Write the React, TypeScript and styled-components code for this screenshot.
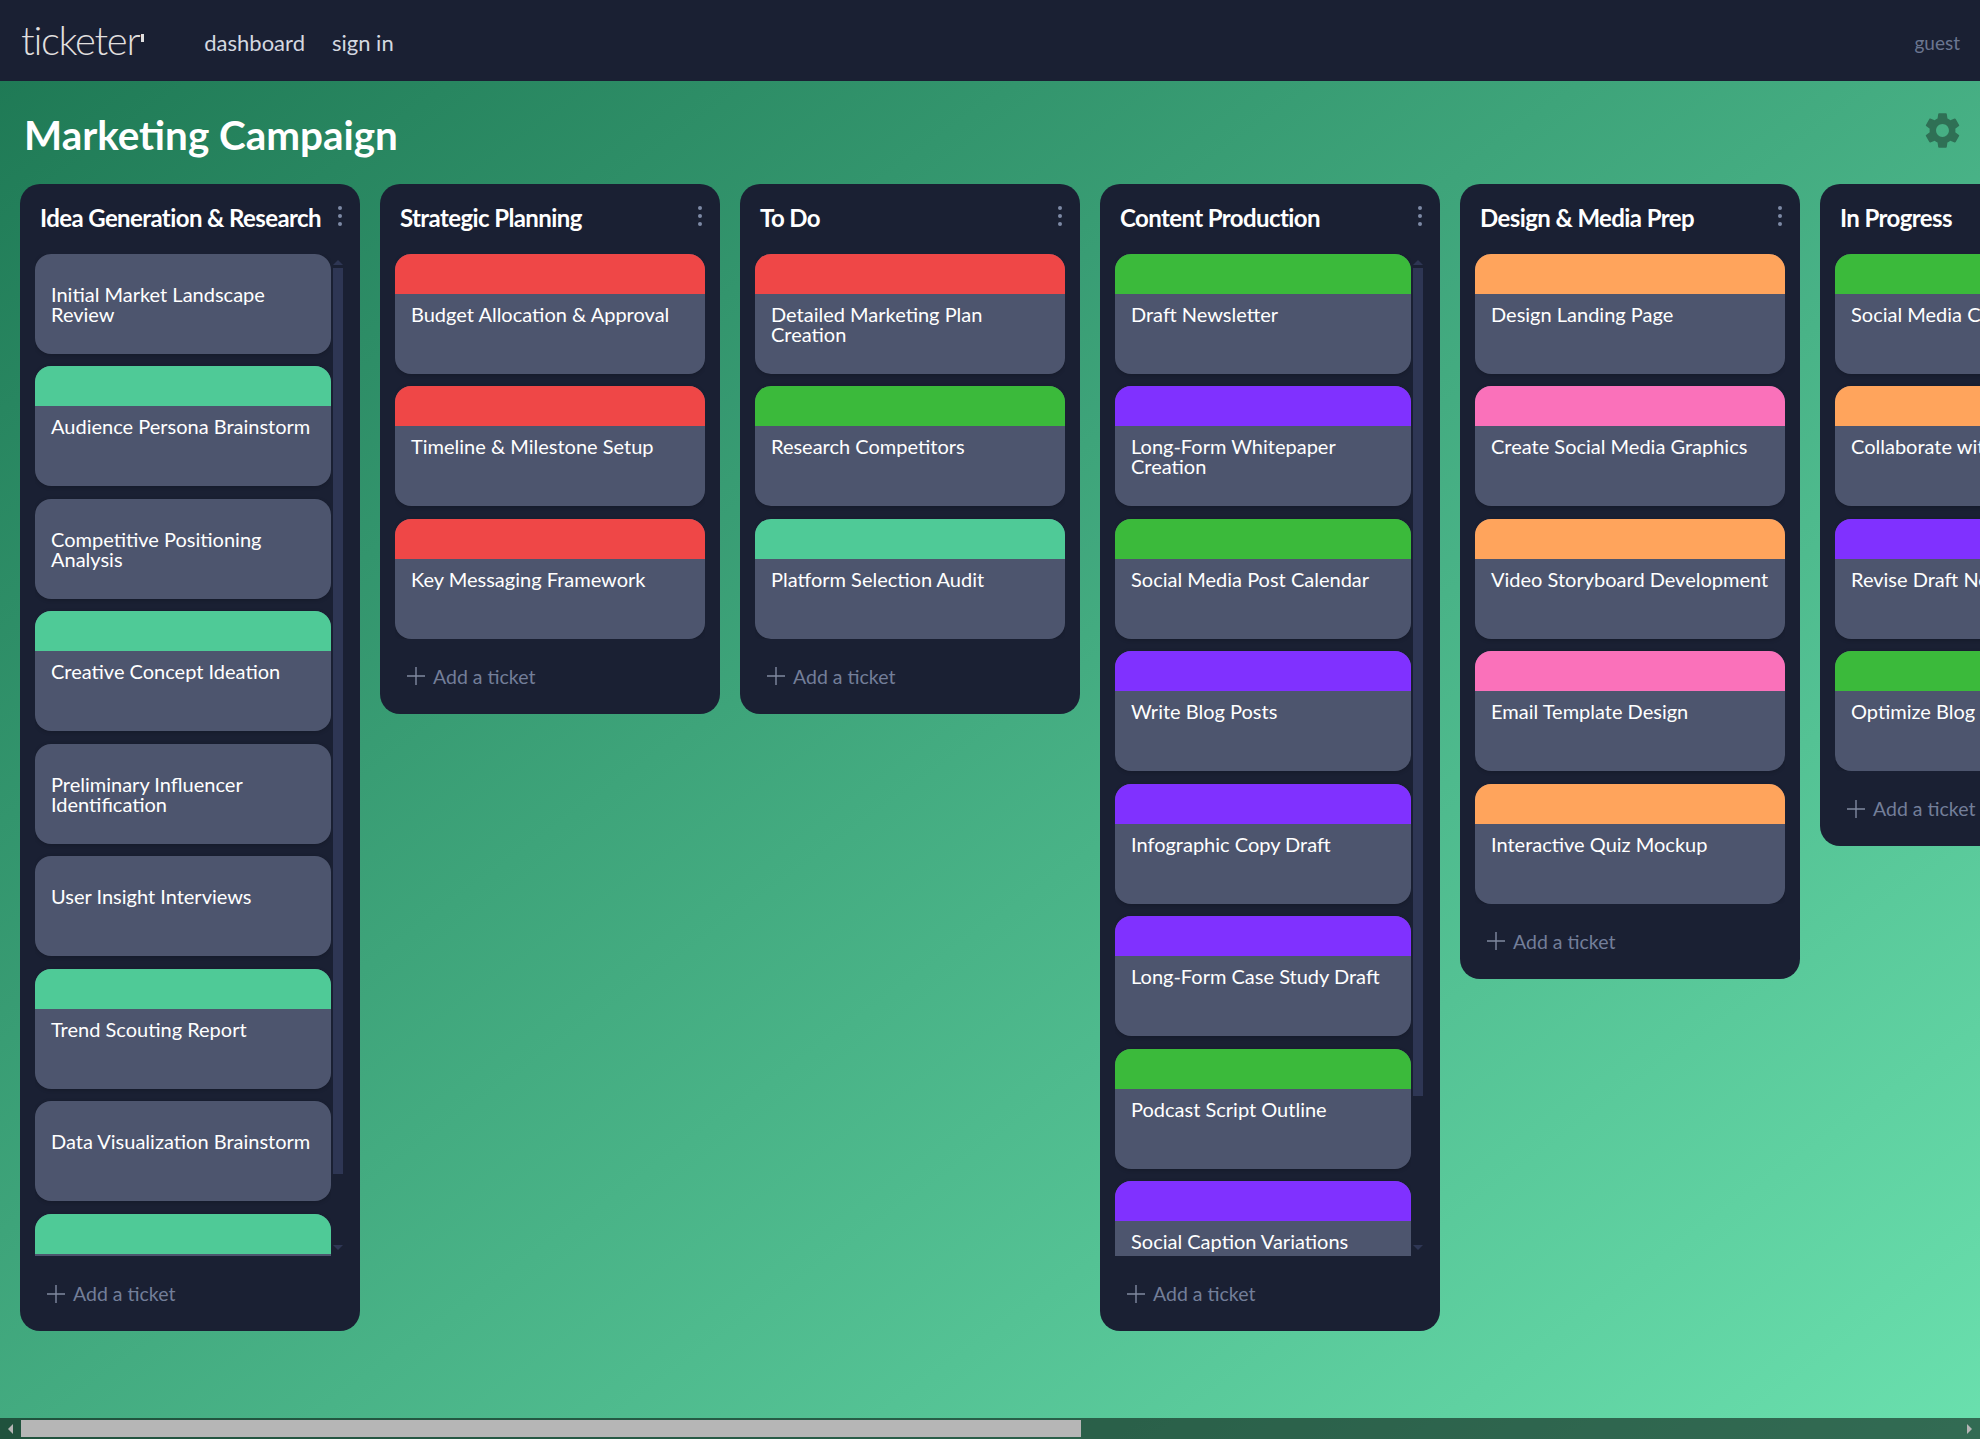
import React from 'react';
import styled, { createGlobalStyle } from 'styled-components';
import { MdSettings } from 'react-icons/md';

const GlobalStyle = createGlobalStyle`
  html, body {
    margin: 0;
    height: 100%;
  }
  body {
    background: linear-gradient(to bottom right, #1d7753, #6ae0ae);
    font-family: Lato, "Open Sans", sans-serif;
    overflow: hidden;
  }
`

const Shell = styled.div`
  height: 100vh;
  display: flex;
  flex-direction: column;
`

const Nav = styled.nav`
  flex: 0 0 81px;
  display: flex;
  align-items: center;
  background-color: #1a2033;
  padding: 0 20px 0 21px;
`

const Logo = styled.div`
  font-size: 40px;
  font-weight: 300;
  letter-spacing: -1.3px;
  color: #e0dfdf;
  margin-right: 60px;
  margin-top: -2px;
  display: flex;
  align-items: flex-start;

  &::after {
    content: '';
    width: 3px;
    height: 8px;
    margin: 18px 0 0 2px;
    background-color: #e0dfdf;
  }
`

const NavLink = styled.a`
  font-size: 22px;
  color: #d4d8e0;
  margin: 4px 27px 0 0;
  text-decoration: none;
`

const Guest = styled.span`
  margin: 4px 0 0 auto;
  font-size: 19px;
  color: #6b7690;
`

const TitleRow = styled.div`
  flex: 0 0 103px;
  display: flex;
  align-items: center;
  justify-content: space-between;
  padding: 0 16px 0 24px;
`

const PageTitle = styled.h1`
  margin: 3px 0 0;
  font-size: 40.4px;
  font-weight: 700;
  color: #fff;
`

const Gear = styled(MdSettings)`
  width: 43px;
  height: 43px;
  margin-bottom: 5px;
  color: #2f7055;
`

const Board = styled.main`
  flex: 1;
  min-height: 0;
  display: flex;
  align-items: flex-start;
  gap: 20px;
  padding: 0 0 87px 20px;
  overflow: hidden;
`

const Column = styled.section`
  flex: 0 0 340px;
  max-height: 100%;
  display: flex;
  flex-direction: column;
  background-color: #1a2033;
  border-radius: 20px;
`

const ColumnHead = styled.header`
  flex: 0 0 70px;
  display: flex;
  align-items: center;
  justify-content: space-between;
  padding: 0 18px 0 20px;
`

const ColumnTitle = styled.h2`
  margin: 0 0 4px;
  font-size: 24px;
  font-weight: 700;
  letter-spacing: -0.6px;
  color: #fff;
  white-space: nowrap;
`

const Kebab = styled.div`
  display: flex;
  flex-direction: column;
  gap: 4px;
  margin-bottom: 6px;

  span {
    width: 4px;
    height: 4px;
    border-radius: 50%;
    background-color: #7d89a6;
  }
`

const ListWrap = styled.div`
  flex: 1;
  min-height: 0;
  display: flex;
  padding: 0 15px;
`

const List = styled.div`
  flex: 1;
  min-width: 0;
  display: flex;
  flex-direction: column;
  gap: 12.45px;
  overflow: hidden;
`

const Track = styled.div`
  flex: 0 0 14px;
  display: flex;
  flex-direction: column;
  align-items: center;
  padding: 6px 0;
  box-sizing: border-box;

  &::before, &::after {
    content: '';
    flex: none;
    border-left: 5px solid transparent;
    border-right: 5px solid transparent;
  }
  &::before {
    border-bottom: 5px solid #2e3654;
    margin-bottom: 3px;
  }
  &::after {
    margin-top: auto;
    border-top: 5px solid #2e3654;
  }
`

const Thumb = styled.div`
  flex: none;
  width: 10px;
  background-color: #2e3654;
`

const Card = styled.article`
  flex: none;
  background-color: #4d556e;
  border-radius: 16px;
  box-shadow: 0 1px 4px rgba(0, 0, 0, 0.2);
  overflow: hidden;
`

const Label = styled.div<{ $color: string }>`
  height: 40px;
  background-color: ${p => p.$color};
`

const CardText = styled.p<{ $bare: boolean }>`
  margin: 0;
  min-height: 40px;
  padding: ${p => (p.$bare ? '30px' : '10px')} 10px 30px 16px;
  font-size: 20px;
  line-height: 20px;
  color: #fff;
`

const AddTicket = styled.div`
  flex: 0 0 75px;
  display: flex;
  align-items: center;
  gap: 8px;
  padding-left: 27px;
  box-sizing: border-box;
  font-size: 19.5px;
  color: #737e99;
`

const ScrollBar = styled.div`
  flex: 0 0 21px;
  display: flex;
  align-items: center;
  background-color: rgba(0, 0, 0, 0.52);
`

const ArrowBox = styled.div<{ $right?: boolean }>`
  flex: 0 0 21px;
  display: flex;
  justify-content: center;
  margin-left: ${p => (p.$right ? 'auto' : '0')};

  &::before {
    content: '';
    border-top: 5px solid transparent;
    border-bottom: 5px solid transparent;
    ${p => (p.$right ? 'border-left: 5px solid #b5b5b5;' : 'border-right: 5px solid #b5b5b5;')}
  }
`

const BarThumb = styled.div`
  width: 1060px;
  height: 17px;
  background-color: #b6b6b6;
`

const PlusIcon = () => (
  <svg width="18" height="18" viewBox="0 0 18 18">
    <path d="M9 0v18M0 9h18" stroke="#8089a0" strokeWidth="1.4" fill="none" />
  </svg>
);

const RED = '#ef4747';
const GREEN = '#3bba3b';
const TEAL = '#4fca97';
const PURPLE = '#8031ff';
const ORANGE = '#ffa45c';
const PINK = '#fa71ba';

type Ticket = { title: string; color?: string };
type Col = { title: string; tickets: Ticket[]; thumb?: number };

const columns: Col[] = [
  {
    title: 'Idea Generation & Research',
    thumb: 906,
    tickets: [
      { title: 'Initial Market Landscape Review' },
      { title: 'Audience Persona Brainstorm', color: TEAL },
      { title: 'Competitive Positioning Analysis' },
      { title: 'Creative Concept Ideation', color: TEAL },
      { title: 'Preliminary Influencer Identification' },
      { title: 'User Insight Interviews' },
      { title: 'Trend Scouting Report', color: TEAL },
      { title: 'Data Visualization Brainstorm' },
      { title: '', color: TEAL },
    ],
  },
  {
    title: 'Strategic Planning',
    tickets: [
      { title: 'Budget Allocation & Approval', color: RED },
      { title: 'Timeline & Milestone Setup', color: RED },
      { title: 'Key Messaging Framework', color: RED },
    ],
  },
  {
    title: 'To Do',
    tickets: [
      { title: 'Detailed Marketing Plan Creation', color: RED },
      { title: 'Research Competitors', color: GREEN },
      { title: 'Platform Selection Audit', color: TEAL },
    ],
  },
  {
    title: 'Content Production',
    thumb: 828,
    tickets: [
      { title: 'Draft Newsletter', color: GREEN },
      { title: 'Long-Form Whitepaper Creation', color: PURPLE },
      { title: 'Social Media Post Calendar', color: GREEN },
      { title: 'Write Blog Posts', color: PURPLE },
      { title: 'Infographic Copy Draft', color: PURPLE },
      { title: 'Long-Form Case Study Draft', color: PURPLE },
      { title: 'Podcast Script Outline', color: GREEN },
      { title: 'Social Caption Variations', color: PURPLE },
    ],
  },
  {
    title: 'Design & Media Prep',
    tickets: [
      { title: 'Design Landing Page', color: ORANGE },
      { title: 'Create Social Media Graphics', color: PINK },
      { title: 'Video Storyboard Development', color: ORANGE },
      { title: 'Email Template Design', color: PINK },
      { title: 'Interactive Quiz Mockup', color: ORANGE },
    ],
  },
  {
    title: 'In Progress',
    tickets: [
      { title: 'Social Media Campaign', color: GREEN },
      { title: 'Collaborate with Designers', color: ORANGE },
      { title: 'Revise Draft Newsletter', color: PURPLE },
      { title: 'Optimize Blog Posts', color: GREEN },
    ],
  },
];

const App = () => {
  return (
    <Shell>
      <GlobalStyle />
      <Nav>
        <Logo>ticketer</Logo>
        <NavLink href="#">dashboard</NavLink>
        <NavLink href="#">sign in</NavLink>
        <Guest>guest</Guest>
      </Nav>
      <TitleRow>
        <PageTitle>Marketing Campaign</PageTitle>
        <Gear />
      </TitleRow>
      <Board>
        {columns.map(col => (
          <Column key={col.title}>
            <ColumnHead>
              <ColumnTitle>{col.title}</ColumnTitle>
              <Kebab>
                <span />
                <span />
                <span />
              </Kebab>
            </ColumnHead>
            <ListWrap>
              <List>
                {col.tickets.map((t, i) => (
                  <Card key={i}>
                    {t.color && <Label $color={t.color} />}
                    <CardText $bare={!t.color}>{t.title}</CardText>
                  </Card>
                ))}
              </List>
              {col.thumb && (
                <Track>
                  <Thumb style={{ height: col.thumb }} />
                </Track>
              )}
            </ListWrap>
            <AddTicket>
              <PlusIcon />
              Add a ticket
            </AddTicket>
          </Column>
        ))}
      </Board>
      <ScrollBar>
        <ArrowBox />
        <BarThumb />
        <ArrowBox $right />
      </ScrollBar>
    </Shell>
  );
}

export default App;
